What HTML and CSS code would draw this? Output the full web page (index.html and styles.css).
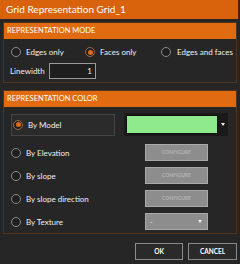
FILE: index.html
```html
<!DOCTYPE html>
<html>
<head>
<meta charset="utf-8">
<link rel="stylesheet" href="styles.css">
</head>
<body>
<div class="window">
  <div class="titlebar">Grid Representation Grid_1</div>
  <div class="content">
    <div class="group g1">
      <div class="ghead">REPRESENTATION MODE</div>
      <div class="modes">
        <label class="opt"><span class="radio"></span><span>Edges only</span></label>
        <label class="opt"><span class="radio on"></span><span>Faces only</span></label>
        <label class="opt"><span class="radio"></span><span class="wide">Edges and faces</span></label>
      </div>
      <div class="lw">
        <span class="lwlabel">Linewidth</span>
        <span class="input">1</span>
      </div>
    </div>
    <div class="group g2">
      <div class="ghead">REPRESENTATION COLOR</div>
      <div class="modelrow">
        <div class="modelbox"><span class="radio on"></span><span>By Model</span></div>
        <div class="swatchbox"><span class="swatch"></span><span class="arrow"></span></div>
      </div>
      <div class="row"><div class="opt2"><span class="radio"></span><span>By Elevation</span></div><div class="btn-dis">CONFIGURE</div></div>
      <div class="row"><div class="opt2"><span class="radio"></span><span>By slope</span></div><div class="btn-dis">CONFIGURE</div></div>
      <div class="row"><div class="opt2"><span class="radio"></span><span>By slope direction</span></div><div class="btn-dis">CONFIGURE</div></div>
      <div class="row"><div class="opt2"><span class="radio"></span><span>By Texture</span></div><div class="combo-dis"><span class="dash">-</span><span class="arrow"></span></div></div>
    </div>
    <div class="footer">
      <div class="btn ok">OK</div>
      <div class="btn cancel">CANCEL</div>
    </div>
  </div>
</div>
</body>
</html>
```
FILE: styles.css
```css
html, body {
  margin: 0;
  padding: 0;
  background: #262626;
}
body {
  width: 240px;
  height: 264px;
  overflow: hidden;
  font-family: Lato, "Open Sans", sans-serif;
  color: #f0f0f0;
}
.window {
  width: 240px;
  height: 264px;
  background: #262626;
}
.titlebar {
  height: 19px;
  line-height: 19px;
  background: #d9630d;
  color: #fff;
  font-size: 10px;
  padding-left: 6px;
  margin-right: 2px;
  border-right: 1px solid #5e2208;
  box-sizing: border-box;
  width: 239px;
}
.content {
  padding: 3px 3px 0 3px;
}
.group {
  border: 1px solid #4f3520;
  box-sizing: border-box;
}
.ghead {
  height: 16px;
  line-height: 16px;
  background: #e06b10;
  color: #fff;
  font-size: 7.5px;
  padding-left: 3px;
}
.g1 {
  padding-bottom: 3px;
}
.modes {
  display: grid;
  grid-template-columns: 74px 76px 1fr;
  height: 18px;
  margin-top: 4px;
  padding-left: 7px;
  align-items: center;
}
.opt, .opt2 {
  display: flex;
  align-items: center;
  gap: 5px;
  font-size: 8px;
}
.opt .wide { margin-left: 1px; }
.radio {
  width: 8px;
  height: 8px;
  border: 1px solid #8c8c8c;
  border-radius: 50%;
  background: #1f1f1f;
  display: inline-flex;
  align-items: center;
  justify-content: center;
  flex: none;
}
.radio.on {
  border-color: #9a6a48;
}
.radio.on::after {
  content: "";
  width: 5px;
  height: 5px;
  border-radius: 50%;
  background: #e36a12;
}
.lw {
  display: flex;
  align-items: center;
  height: 16px;
  margin-top: 2px;
  padding-left: 6px;
  font-size: 8px;
}
.lwlabel {
  width: 39px;
}
.input {
  width: 47px;
  height: 16px;
  box-sizing: border-box;
  border: 1px solid #9a9a9a;
  background: #1e1e1e;
  text-align: right;
  padding-right: 3px;
  line-height: 14px;
  font-size: 8px;
}
.g2 {
  margin-top: 7px;
}
.modelrow {
  display: flex;
  align-items: center;
  margin-top: 6px;
  height: 23px;
  padding-left: 7px;
}
.modelbox {
  width: 104px;
  height: 22px;
  box-sizing: border-box;
  border: 1px solid #454545;
  background: #2b2b2b;
  display: flex;
  align-items: center;
  gap: 5px;
  padding-left: 1px;
  font-size: 8px;
}
.swatchbox {
  margin-left: 9px;
  width: 104px;
  height: 23px;
  background: #1a1a1a;
  display: flex;
  align-items: center;
  padding-left: 2px;
  box-sizing: border-box;
}
.swatch {
  width: 92px;
  height: 19px;
  background: #8fea8c;
  border: 1px solid #0e0e0e;
  box-sizing: border-box;
}
.arrow {
  width: 0;
  height: 0;
  border-left: 2.5px solid transparent;
  border-right: 2.5px solid transparent;
  border-top: 3px solid #f2f2f2;
  margin-left: 3px;
}
.row {
  display: grid;
  grid-template-columns: 134px 63px;
  align-items: center;
  height: 23px;
  padding-left: 7px;
}
.row:nth-of-type(3) { margin-top: 5px; }
.g2 > .row:first-of-type { margin-top: 5px; }
.btn-dis {
  height: 17px;
  box-sizing: border-box;
  border: 1px solid #a9a9a9;
  background: #8d8d8d;
  color: #b4b4b4;
  font-size: 5px;
  text-align: center;
  line-height: 15px;
  font-weight: bold;
}
.combo-dis {
  height: 17px;
  box-sizing: border-box;
  border: 1px solid #a9a9a9;
  background: #8d8d8d;
  display: flex;
  align-items: center;
  justify-content: space-between;
  padding: 0 5px 0 4px;
  font-size: 7px;
}
.combo-dis .arrow { margin-left: 0; }
.dash { color: #e0e0e0; }
.footer {
  display: flex;
  justify-content: flex-end;
  gap: 5px;
  margin-top: 9px;
}
.btn {
  height: 17px;
  box-sizing: border-box;
  border: 1px solid #8a8a8a;
  background: #2a2a2a;
  color: #fff;
  font-size: 6.5px;
  font-weight: bold;
  text-align: center;
  line-height: 15px;
}
.ok { width: 48px; }
.cancel { width: 49px; }
```
